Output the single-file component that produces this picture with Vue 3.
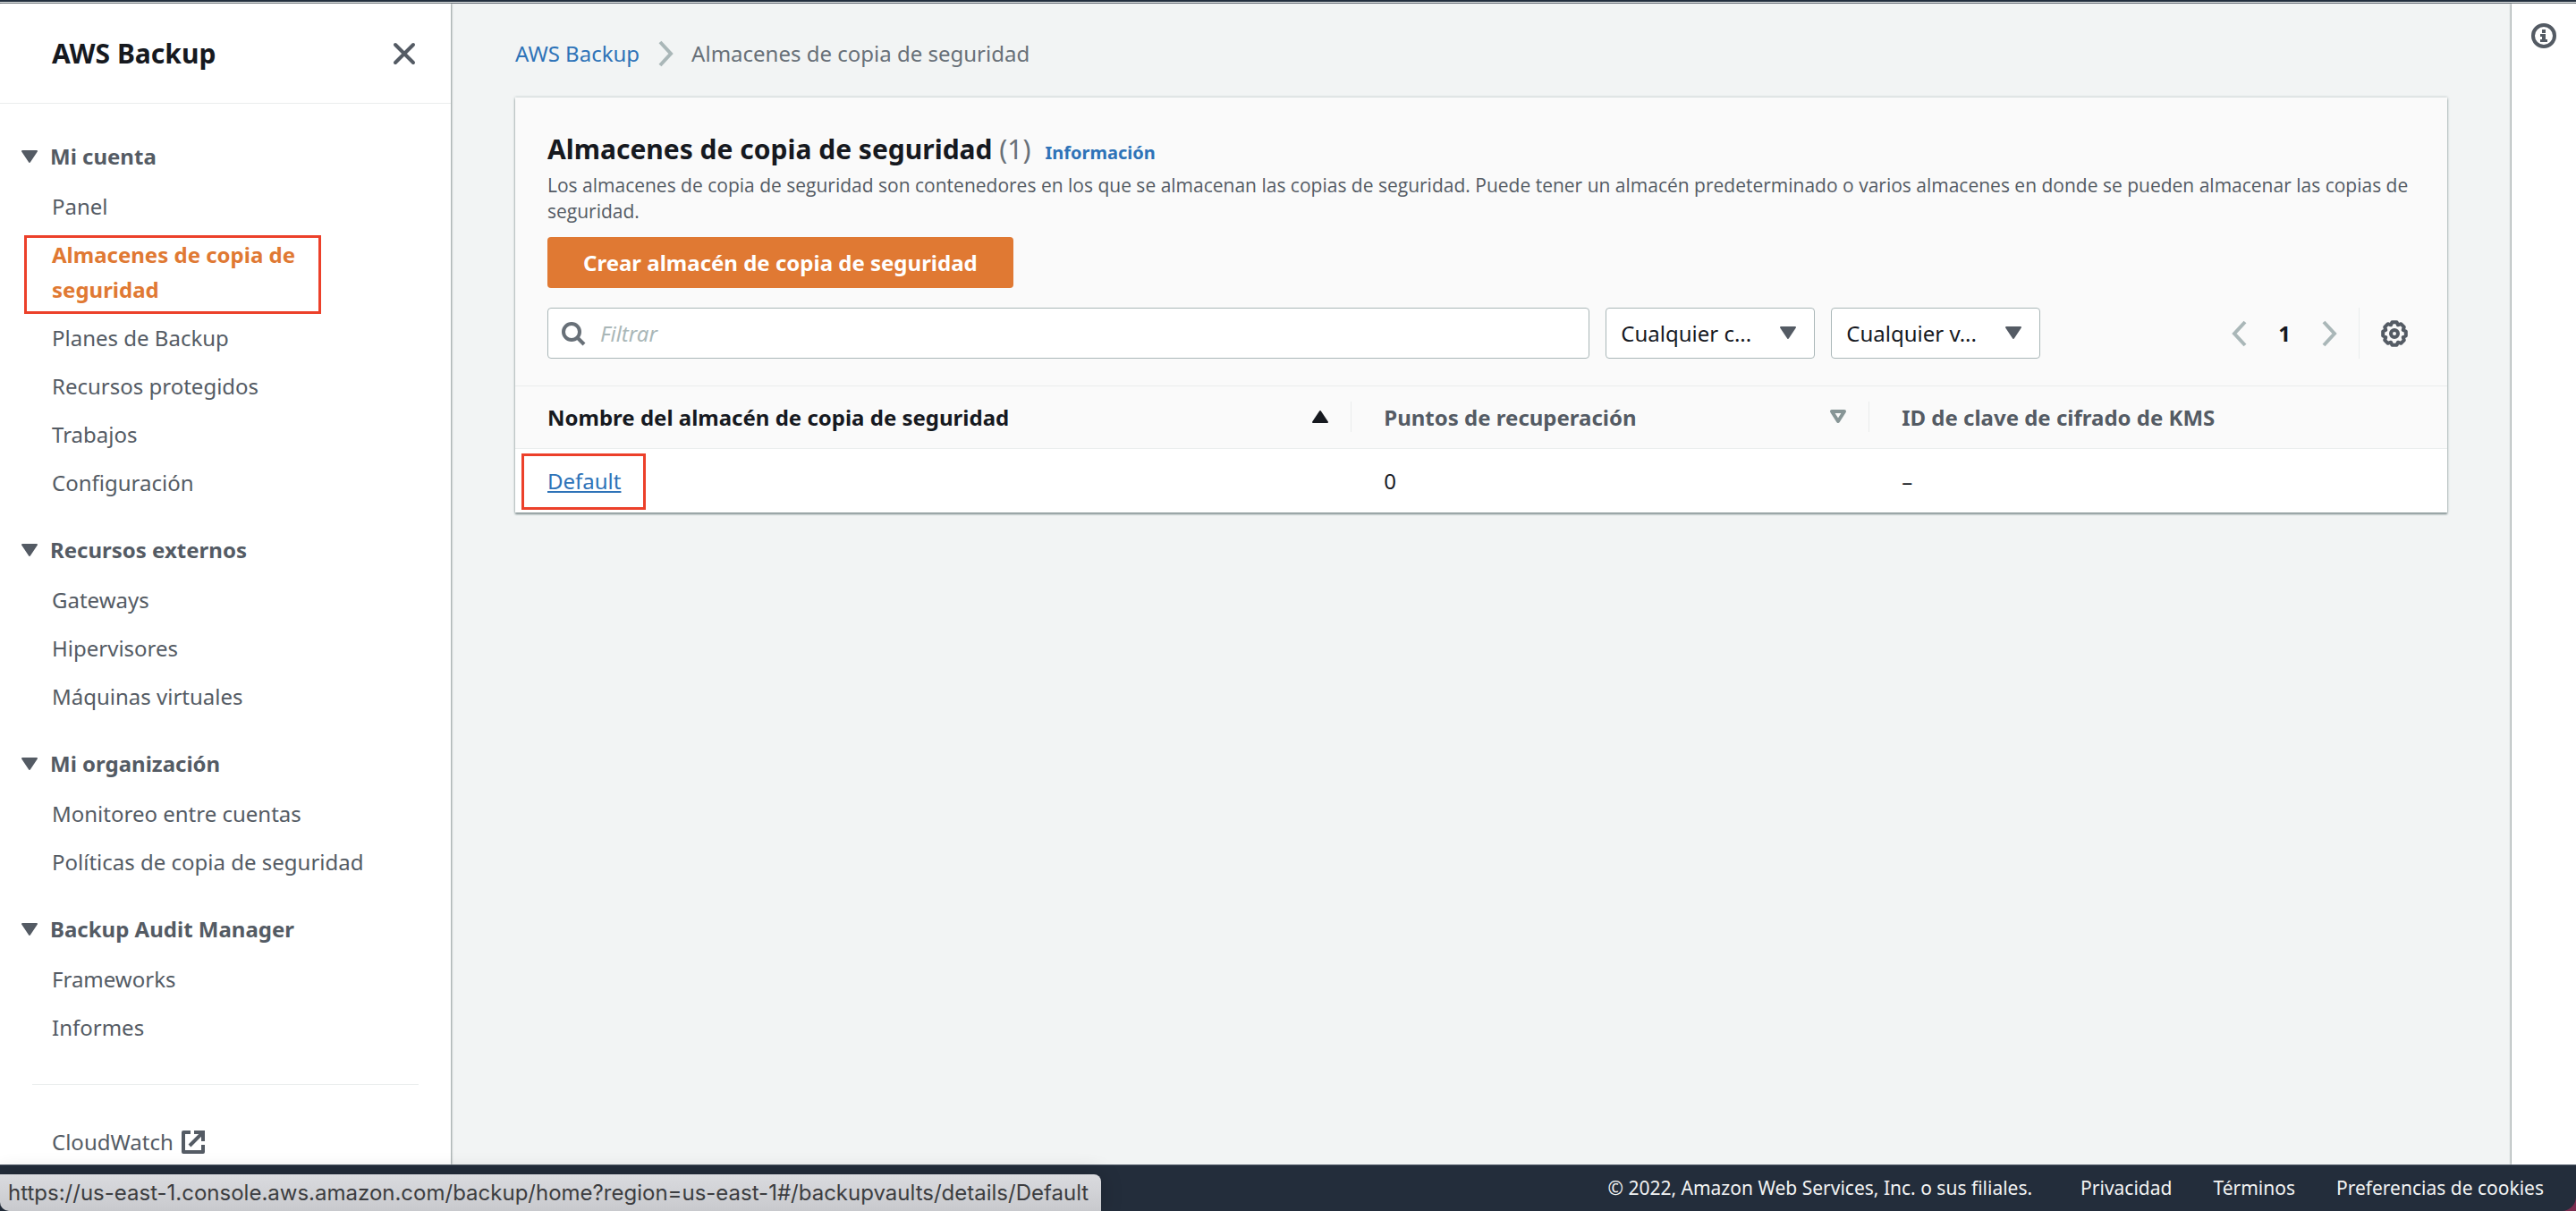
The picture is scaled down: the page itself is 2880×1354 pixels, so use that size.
<script setup>
import { ref } from 'vue'

const groups = [
  {
    title: 'Mi cuenta',
    items: [
      'Panel',
      'Almacenes de copia de seguridad',
      'Planes de Backup',
      'Recursos protegidos',
      'Trabajos',
      'Configuración',
    ],
  },
  { title: 'Recursos externos', items: ['Gateways', 'Hipervisores', 'Máquinas virtuales'] },
  { title: 'Mi organización', items: ['Monitoreo entre cuentas', 'Políticas de copia de seguridad'] },
  { title: 'Backup Audit Manager', items: ['Frameworks', 'Informes'] },
]
const active = 'Almacenes de copia de seguridad'
const vaults = [{ name: 'Default', points: 0, key: '–' }]
const filter = ref('')
</script>

<template>
  <div class="shell">
    <header class="topbar"></header>

    <div class="body">
      <aside class="sidebar">
        <div class="side-head">
          <h2>AWS Backup</h2>
          <button class="icon-btn" type="button" aria-label="Cerrar">
            <svg width="26" height="26" viewBox="0 0 26 26" fill="none" stroke="currentColor" stroke-width="4" stroke-linecap="round">
              <path d="M3 3l20 20M23 3L3 23" />
            </svg>
          </button>
        </div>
        <nav class="nav">
          <section v-for="g in groups" :key="g.title" class="group">
            <button class="group-title" type="button" aria-expanded="true">
              <svg width="20" height="16" viewBox="0 0 20 16" fill="currentColor" stroke="currentColor" stroke-width="2" stroke-linejoin="round">
                <path d="M2 2h16l-8 12z" />
              </svg>
              {{ g.title }}
            </button>
            <ul>
              <li v-for="i in g.items" :key="i">
                <a href="#" :class="{ active: i === active }">{{ i }}</a>
              </li>
            </ul>
          </section>
          <hr />
          <a class="external" href="#">
            CloudWatch
            <svg width="28" height="28" viewBox="0 0 28 28" fill="none" stroke="currentColor" stroke-width="4">
              <path d="M11 3H3v22h22v-8" stroke-linejoin="round" />
              <path d="M15 3h10v10M25 3L10 18" />
            </svg>
          </a>
        </nav>
      </aside>

      <main class="main">
        <nav class="crumbs" aria-label="Ruta">
          <a href="#">AWS Backup</a>
          <svg width="18" height="30" viewBox="0 0 18 30" fill="none" stroke="currentColor" stroke-width="4">
            <path d="M3 2l12 13L3 28" />
          </svg>
          <span>Almacenes de copia de seguridad</span>
        </nav>

        <section class="panel">
          <div class="panel-head">
            <div class="title-row">
              <h1>Almacenes de copia de seguridad <span>(1)</span></h1>
              <a href="#">Información</a>
            </div>
            <p class="desc">
              Los almacenes de copia de seguridad son contenedores en los que se almacenan las copias de seguridad. Puede tener un almacén predeterminado o varios almacenes en donde se pueden almacenar las copias de seguridad.
            </p>
            <button class="primary" type="button">Crear almacén de copia de seguridad</button>
            <div class="tools">
              <label class="search">
                <svg width="28" height="28" viewBox="0 0 28 28" fill="none" stroke="currentColor" stroke-width="4">
                  <circle cx="12" cy="12" r="9" />
                  <path d="M18 18l8 8" />
                </svg>
                <input v-model="filter" type="text" placeholder="Filtrar" aria-label="Filtrar" />
              </label>
              <div class="select">
                <select aria-label="Clave"><option>Cualquier c...</option></select>
                <svg width="20" height="16" viewBox="0 0 20 16" fill="currentColor" stroke="currentColor" stroke-width="2" stroke-linejoin="round">
                  <path d="M2 2h16l-8 12z" />
                </svg>
              </div>
              <div class="select">
                <select aria-label="Valor"><option>Cualquier v...</option></select>
                <svg width="20" height="16" viewBox="0 0 20 16" fill="currentColor" stroke="currentColor" stroke-width="2" stroke-linejoin="round">
                  <path d="M2 2h16l-8 12z" />
                </svg>
              </div>
              <div class="pager">
                <button class="icon-btn pale" type="button" aria-label="Anterior">
                  <svg width="18" height="30" viewBox="0 0 18 30" fill="none" stroke="currentColor" stroke-width="4">
                    <path d="M15 2L3 15l12 13" />
                  </svg>
                </button>
                <b>1</b>
                <button class="icon-btn pale" type="button" aria-label="Siguiente">
                  <svg width="18" height="30" viewBox="0 0 18 30" fill="none" stroke="currentColor" stroke-width="4">
                    <path d="M3 2l12 13L3 28" />
                  </svg>
                </button>
              </div>
              <div class="prefs">
                <button class="icon-btn" type="button" aria-label="Preferencias">
                  <svg width="30" height="30" viewBox="0 0 30 30" fill="none" stroke="currentColor" stroke-linejoin="round">
                    <path
                      d="M27.800 12.500v5L24.700 19l1.100 3.300-3.500 3.500L19 24.700l-1.500 3.100h-5L11 24.700l-3.300 1.100-3.500-3.500L5.300 19l-3.100-1.500v-5L5.300 11 4.200 7.700l3.500-3.500L11 5.300l1.500-3.100h5L19 5.300l3.300-1.100 3.500 3.500L24.700 11z"
                      stroke-width="4"
                    />
                    <circle cx="15" cy="15" r="4" stroke-width="4" />
                  </svg>
                </button>
              </div>
            </div>
          </div>

          <table>
            <thead>
              <tr>
                <th class="c1 sorted">
                  <div>
                    Nombre del almacén de copia de seguridad
                    <svg width="20" height="16" viewBox="0 0 20 16" fill="currentColor" stroke="currentColor" stroke-width="2" stroke-linejoin="round">
                      <path d="M2 14h16L10 2z" />
                    </svg>
                  </div>
                </th>
                <th class="c2">
                  <div>
                    Puntos de recuperación
                    <svg class="unsorted" width="20" height="16" viewBox="0 0 20 16" fill="none" stroke="currentColor" stroke-width="4" stroke-linejoin="round">
                      <path d="M3 2h14l-7 11z" />
                    </svg>
                  </div>
                </th>
                <th><div>ID de clave de cifrado de KMS</div></th>
              </tr>
            </thead>
            <tbody>
              <tr v-for="v in vaults" :key="v.name">
                <td><a class="vault" href="#">{{ v.name }}</a></td>
                <td>{{ v.points }}</td>
                <td>{{ v.key }}</td>
              </tr>
            </tbody>
          </table>
        </section>
      </main>

      <aside class="rail">
        <button class="icon-btn" type="button" aria-label="Ayuda">
          <svg width="30" height="30" viewBox="0 0 30 30">
            <circle cx="15" cy="15" r="12" fill="none" stroke="currentColor" stroke-width="4" />
            <path d="M13 8h4v4h-4zM11 13h6v6h2v3h-8v-3h2v-3h-2z" fill="currentColor" />
          </svg>
        </button>
      </aside>
    </div>

    <div class="footer-wrap">
      <footer class="footer">
        <span>© 2022, Amazon Web Services, Inc. o sus filiales.</span>
        <a href="#">Privacidad</a>
        <a href="#">Términos</a>
        <a href="#">Preferencias de cookies</a>
      </footer>
      <div class="status">https://us-east-1.console.aws.amazon.com/backup/home?region=us-east-1#/backupvaults/details/Default</div>
    </div>
  </div>
</template>

<style>
body {
  margin: 0;
}
</style>

<style scoped>
* {
  box-sizing: border-box;
}
.shell {
  display: flex;
  flex-direction: column;
  height: 100vh;
  font: 24px/39px "Noto Sans", "Open Sans", sans-serif;
  color: #16191f;
  background: #f2f4f4;
}
button,
input,
select {
  font: inherit;
  color: inherit;
}
svg {
  display: block;
  flex: none;
}
a {
  color: #2e73b8;
  text-decoration: none;
}
.icon-btn {
  padding: 0;
  border: 0;
  background: none;
  color: #545b64;
}
.icon-btn.pale {
  color: #aab7b8;
}
.topbar {
  flex: none;
  height: 4px;
  background: #545b64;
  border-top: 2px solid #232f3e;
  box-shadow: inset 0 1px #eaeded;
}
.body {
  flex: 1;
  min-height: 0;
  display: flex;
}

/* Navigation */
.sidebar {
  flex: none;
  width: 504px;
  overflow: hidden;
  background: #fff;
  box-shadow: 1px 0 2px #8f9999;
}
.side-head {
  display: flex;
  align-items: center;
  justify-content: space-between;
  height: 112px;
  padding: 0 39px 0 58px;
  border-bottom: 1px solid #eaeded;
}
h2 {
  margin: 0;
  font-size: 30px;
}
.nav {
  padding-top: 39px;
  color: #545b64;
}
.group {
  margin-bottom: 36px;
}
.group-title {
  display: flex;
  align-items: center;
  gap: 13px;
  margin-bottom: 17px;
  padding: 0 0 0 23px;
  border: 0;
  background: none;
  font-weight: 700;
}
ul {
  display: flex;
  flex-direction: column;
  gap: 15px;
  margin: 0;
  padding: 0 140px 0 58px;
  list-style: none;
}
.group:not(:first-child) ul {
  padding-right: 58px;
}
li a {
  position: relative;
  display: block;
  color: #545b64;
}
li a.active {
  color: #e07933;
  font-weight: 700;
}
li a.active::after {
  content: "";
  position: absolute;
  inset: -2px 5px -8px -31px;
  border: 3px solid #ec402a;
}
hr {
  margin: 44px 36px;
  border: 0;
  border-top: 1px solid #eaeded;
}
.external {
  display: flex;
  align-items: center;
  gap: 8px;
  padding-left: 58px;
  color: #545b64;
}

/* Content */
.main {
  flex: 1;
  min-width: 0;
  padding: 36px 72px 0;
}
.crumbs {
  display: flex;
  align-items: center;
  gap: 20px;
  margin-bottom: 30px;
  color: #687078;
}
.crumbs svg {
  color: #aab7b8;
}
.panel {
  background: #fff;
  box-shadow: 0 2px 2px #879596, 0 0 3px #aab7b8;
}
.panel-head {
  padding: 36px 36px 30px;
  background: #fafafa;
  border-bottom: 1px solid #eaeded;
}
.title-row {
  display: flex;
  align-items: baseline;
  gap: 16px;
  line-height: 44px;
}
h1 {
  margin: 0;
  font-size: 30px;
}
h1 span {
  font-weight: 400;
  color: #687078;
}
.title-row a {
  font-size: 20px;
  font-weight: 700;
}
.desc {
  margin: 0 0 14px;
  font-family: "Open Sans", sans-serif;
  font-size: 21px;
  line-height: 29px;
  color: #545b64;
}
.primary {
  display: block;
  height: 57px;
  padding: 0 40px;
  border: 0;
  border-radius: 4px;
  background: #e07933;
  color: #fff;
  font-weight: 700;
}
.tools {
  display: flex;
  align-items: center;
  margin-top: 22px;
}
.search {
  flex: 1;
  display: flex;
  align-items: center;
  height: 57px;
  padding: 0 14px;
  gap: 16px;
  border: 1px solid #aab7b8;
  border-radius: 4px;
  background: #fff;
  color: #687078;
}
.search input {
  flex: 1;
  min-width: 0;
  padding: 0;
  border: 0;
  outline: 0;
  background: none;
}
.search input::placeholder {
  color: #aab7b8;
  font-style: italic;
}
.select {
  position: relative;
  width: 234px;
  margin-left: 18px;
}
.select select {
  display: block;
  width: 100%;
  height: 57px;
  padding: 0 56px 0 16px;
  border: 1px solid #aab7b8;
  border-radius: 4px;
  background: #fff;
  appearance: none;
}
.select svg {
  position: absolute;
  top: 20px;
  right: 20px;
  color: #545b64;
  pointer-events: none;
}
.pager {
  display: flex;
  align-items: center;
  gap: 34px;
  margin-left: 214px;
}
.prefs {
  display: flex;
  align-items: center;
  height: 57px;
  margin-left: 24px;
  padding: 0 8px 0 24px;
  border-left: 1px solid #eaeded;
}
table {
  width: 100%;
  table-layout: fixed;
  border-collapse: collapse;
  text-align: left;
}
thead {
  background: #fafafa;
}
th {
  height: 69px;
  padding: 0;
  border-bottom: 1px solid #eaeded;
  color: #545b64;
}
th div {
  display: flex;
  align-items: center;
  justify-content: space-between;
  height: 34px;
  padding: 0 24px 0 36px;
}
th:not(:last-child) div {
  border-right: 1px solid #eaeded;
}
.c1 {
  width: 43.3%;
}
.c2 {
  width: 26.8%;
}
.sorted {
  color: #16191f;
}
.unsorted {
  color: #879596;
}
td {
  height: 72px;
  padding: 0 36px;
}
.vault {
  position: relative;
  text-decoration: underline;
}
.vault::after {
  content: "";
  position: absolute;
  inset: -14px -28px -16px -29px;
  border: 3px solid #ec402a;
}

/* Help rail */
.rail {
  flex: none;
  width: 72px;
  padding: 21px;
  background: #fff;
  box-shadow: -1px 0 2px #8f9999;
}

/* Footer */
.footer-wrap {
  position: relative;
  flex: none;
  background: #7a2c4f;
}
.footer {
  display: flex;
  align-items: center;
  justify-content: flex-end;
  gap: 46px;
  height: 52px;
  padding-right: 36px;
  border-top: 1px solid #4b5563;
  border-bottom-right-radius: 16px;
  background: #232d3b;
  color: #f2f3f3;
  font-size: 21px;
}
.footer a {
  color: inherit;
}
.footer span {
  margin-right: 8px;
}
.status {
  position: absolute;
  left: 0;
  bottom: 0;
  height: 41px;
  padding: 0 14px 0 9px;
  border-radius: 0 8px 0 10px;
  background: linear-gradient(#dadbdf, #c8c9cd);
  box-shadow: 0 0 24px rgba(0, 0, 0, 0.2);
  color: #3c3d40;
  font-family: Inter, sans-serif;
  line-height: 41px;
}
</style>
